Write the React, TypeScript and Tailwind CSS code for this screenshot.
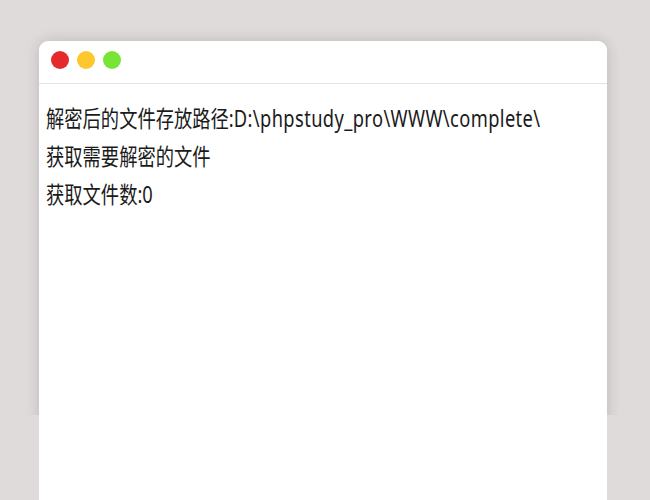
import React from "react";

export default function App() {
  return (
    <div className="w-[650px] h-[500px] overflow-hidden bg-[#e0dbdb]">
      <div className="h-[415px] overflow-hidden pt-[41px] px-[39px]">
        <div className="w-[568px] h-[480px] bg-white rounded-t-[9px] shadow-[0_0_14px_rgba(0,0,0,0.16)]">
          <div className="h-[43px] flex items-start gap-[8.5px] pl-[12px] pt-[10px] border-b border-[#e3e3e3]">
            <span className="w-[17.5px] h-[17.5px] rounded-full bg-[#e52a2d]" />
            <span className="w-[17.5px] h-[17.5px] rounded-full bg-[#fec72e]" />
            <span className="w-[17.5px] h-[17.5px] rounded-full bg-[#76e535]" />
          </div>
          <div className="pl-[7px] pt-[15px]">
            <div className="origin-top-left scale-x-[0.795] w-[750px] text-[23px] leading-[38px] text-[#1a1a1a] font-['Noto_Sans','Noto_Sans_CJK_SC',sans-serif]">
              <div>
                解密后的文件存放路径:
                <span className="tracking-[0.5px]">D:\phpstudy_pro\WWW\complete\</span>
              </div>
              <div>获取需要解密的文件</div>
              <div>获取文件数:0</div>
            </div>
          </div>
        </div>
      </div>
      <div className="px-[39px]">
        <div className="w-[568px] h-[85px] bg-white" />
      </div>
    </div>
  );
}
